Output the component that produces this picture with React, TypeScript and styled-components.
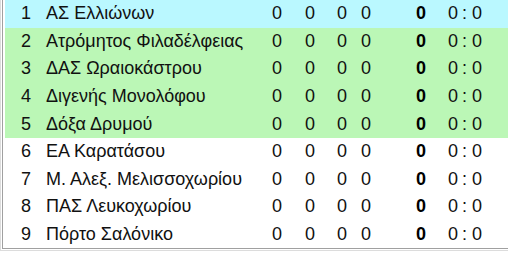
import React from "react";
import styled, { createGlobalStyle } from "styled-components";

type Team = { pos: number; name: string; zone?: "top" | "up" };

const teams: Team[] = [
  { pos: 1, name: "ΑΣ Ελλιώνων", zone: "top" },
  { pos: 2, name: "Ατρόμητος Φιλαδέλφειας", zone: "up" },
  { pos: 3, name: "ΔΑΣ Ωραιοκάστρου", zone: "up" },
  { pos: 4, name: "Διγενής Μονολόφου", zone: "up" },
  { pos: 5, name: "Δόξα Δρυμού", zone: "up" },
  { pos: 6, name: "ΕΑ Καρατάσου" },
  { pos: 7, name: "Μ. Αλεξ. Μελισσοχωρίου" },
  { pos: 8, name: "ΠΑΣ Λευκοχωρίου" },
  { pos: 9, name: "Πόρτο Σαλόνικο" },
];

const Global = createGlobalStyle`
  html, body {
    margin: 0;
    background: #ffffff;
    overflow: hidden;
  }
  * { box-sizing: border-box; }
`;

const Frame = styled.div`
  width: 100%;
  border-left: 1px solid #dcdcdc;
  border-bottom: 1px solid #dcdcdc;
  padding: 0 0 1px 1px;
  background: #ffffff;
`;

const Box = styled.div`
  border-left: 1px solid #a0a0a0;
  border-bottom: 1px solid #a0a0a0;
  padding-left: 2px;
  background: #ffffff;
  font-family: "Liberation Sans", Arial, sans-serif;
  font-size: 18px;
  color: #111111;
`;

const Row = styled.div<{ $zone?: "top" | "up" }>`
  display: grid;
  grid-template-columns: 26px 241px 33px 32px 24px 55px 32px 1fr;
  align-items: center;
  height: 27.6px;
  background: ${(p) =>
    p.$zone === "top" ? "#baf8ff" : p.$zone === "up" ? "#bbf7b6" : "#ffffff"};
`;

const Pos = styled.span`
  text-align: right;
`;

const Name = styled.span`
  padding-left: 15px;
  white-space: nowrap;
`;

const Num = styled.span``;

const Points = styled.span`
  font-weight: 700;
  color: #000000;
`;

const Score = styled.span`
  display: flex;
  align-items: center;
`;

const Colon = styled.span`
  margin: 0 5px 0 4px;
`;

const App = () => {
  return (
    <>
      <Global />
      <Frame>
        <Box>
          {teams.map((t) => (
            <Row key={t.pos} $zone={t.zone}>
              <Pos>{t.pos}</Pos>
              <Name>{t.name}</Name>
              <Num>0</Num>
              <Num>0</Num>
              <Num>0</Num>
              <Num>0</Num>
              <Points>0</Points>
              <Score>
                0<Colon>:</Colon>0
              </Score>
            </Row>
          ))}
        </Box>
      </Frame>
    </>
  );
};

export default App;
